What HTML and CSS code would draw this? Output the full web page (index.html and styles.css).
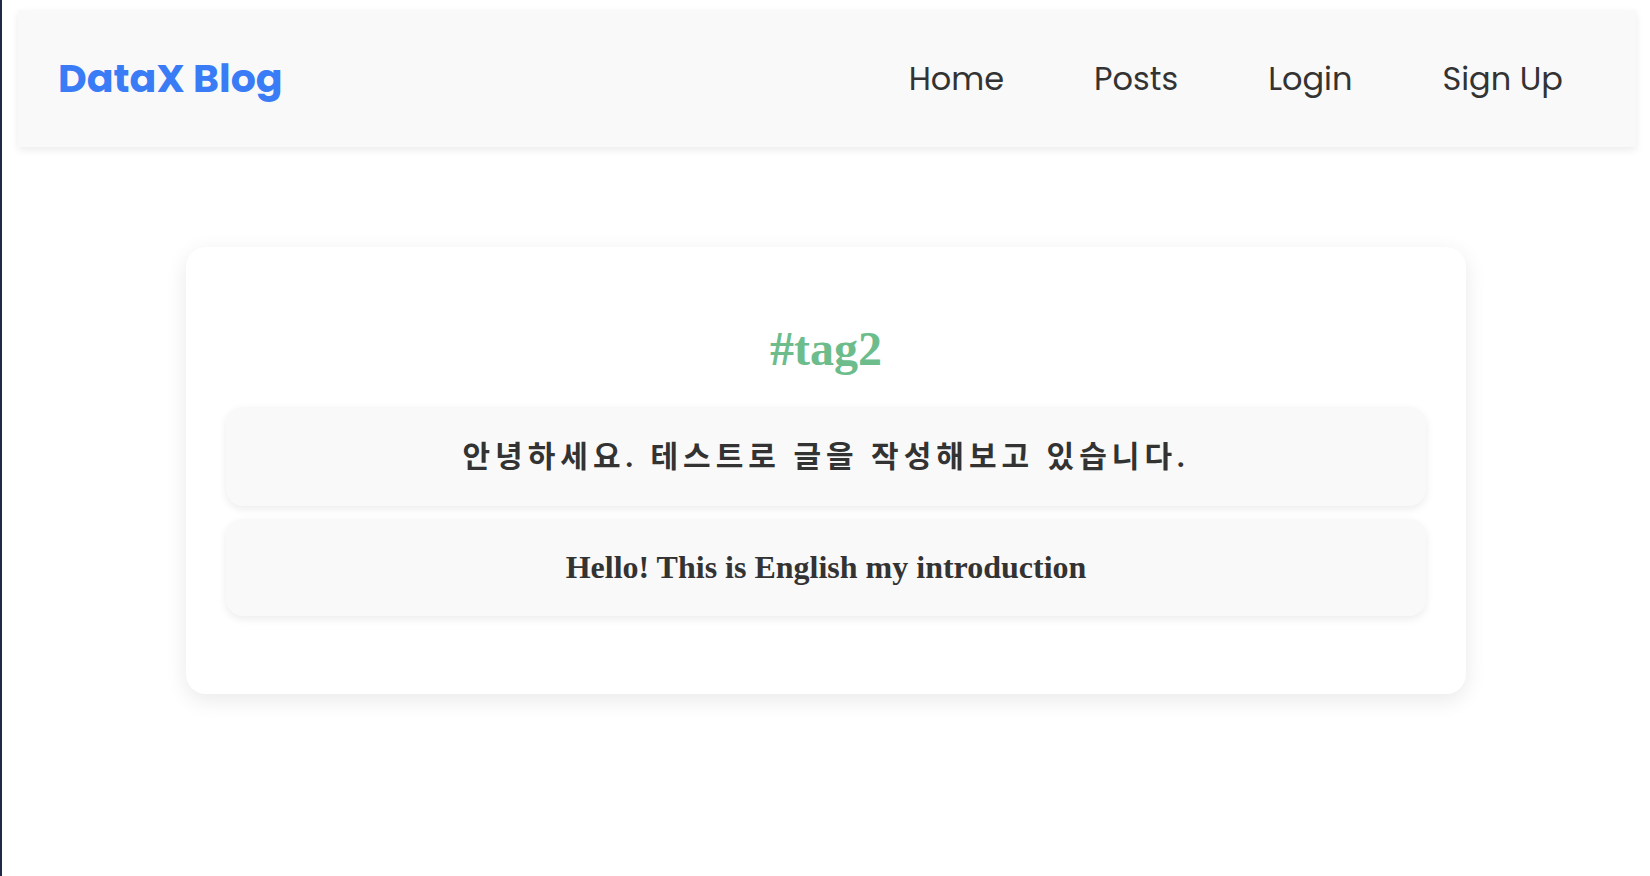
FILE: index.html
```html
<!DOCTYPE html>
<html lang="ko">
<head>
<meta charset="utf-8">
<title>DataX Blog</title>
<link rel="stylesheet" href="styles.css">
</head>
<body>
<div class="page">
  <header class="navbar">
    <a class="logo" href="#">DataX Blog</a>
    <nav class="nav-links">
      <a href="#">Home</a>
      <a href="#">Posts</a>
      <a href="#">Login</a>
      <a href="#">Sign Up</a>
    </nav>
  </header>
  <main class="content">
    <section class="tag-card">
      <h2 class="tag-title">#tag2</h2>
      <div class="post-item ko">안녕하세요. 테스트로 글을 작성해보고 있습니다.</div>
      <div class="post-item">Hello! This is English my introduction</div>
    </section>
  </main>
</div>
</body>
</html>
```
FILE: styles.css
```css
html, body {
  margin: 0;
  padding: 0;
  background: #ffffff;
}

.page {
  min-height: 876px;
  box-sizing: border-box;
  border-left: 2px solid #1d2a44;
  padding-top: 10px;
}

.navbar {
  margin: 0 14px 0 16px;
  height: 137px;
  background: #f9f9f9;
  box-shadow: 0 3px 8px rgba(0, 0, 0, 0.08);
  display: flex;
  align-items: center;
  justify-content: space-between;
  padding: 0 28px 0 40px;
  box-sizing: border-box;
  font-family: "Poppins", "DejaVu Sans", sans-serif;
}

.logo {
  color: #3a7cf6;
  font-weight: 700;
  font-size: 39.5px;
  text-decoration: none;
}

.nav-links {
  display: flex;
  align-items: center;
}

.nav-links a {
  color: #333333;
  text-decoration: none;
  font-size: 32px;
  padding: 0 45px;
}

.content {
  display: flex;
  justify-content: center;
  padding-top: 100px;
}

.tag-card {
  width: 1280px;
  box-sizing: border-box;
  background: #ffffff;
  border-radius: 20px;
  box-shadow: 0 6px 22px rgba(0, 0, 0, 0.09);
  padding: 40px 40px 78px;
  font-family: "Liberation Serif", "Noto Sans CJK KR", serif;
}

.tag-title {
  margin: 34px 0 31px;
  text-align: center;
  color: #6cbc8c;
  font-size: 48px;
  font-weight: 700;
  line-height: 55px;
}

.post-item {
  background: #f9f9f9;
  border-radius: 17px;
  box-shadow: 0 3px 8px rgba(0, 0, 0, 0.08);
  padding: 30px 20px;
  text-align: center;
  color: #333333;
  font-size: 32px;
  font-weight: 700;
  line-height: 37px;
}

.post-item + .post-item {
  margin-top: 13px;
}

.post-item.ko {
  font-size: 30px;
  letter-spacing: 5px;
  line-height: 39px;
}
```
